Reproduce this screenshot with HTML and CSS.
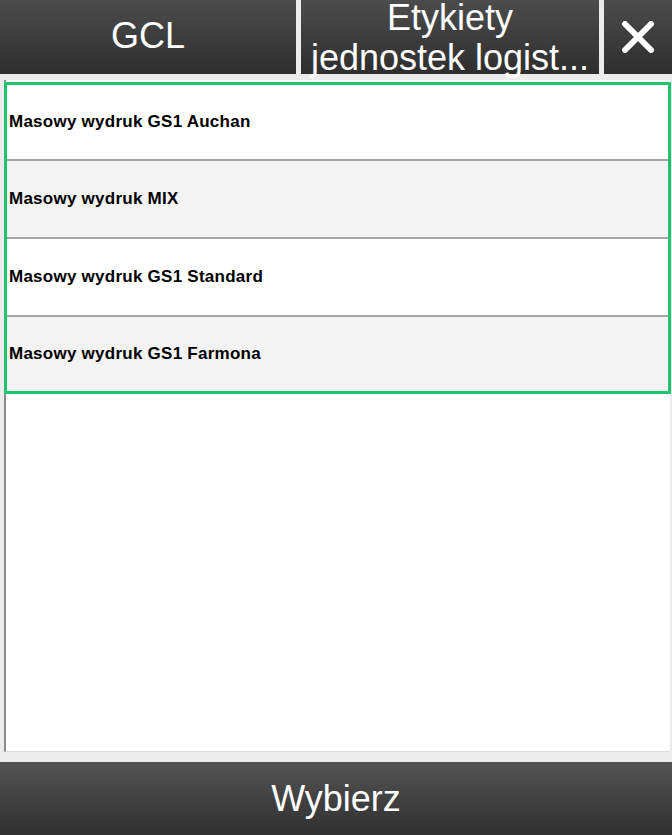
FILE: index.html
```html
<!DOCTYPE html>
<html>
<head>
<meta charset="utf-8">
<link rel="stylesheet" href="styles.css">
</head>
<body>
<div class="app">
  <header class="topbar">
    <div class="tbtn tbtn-main">GCL</div>
    <div class="tbtn tbtn-title"><span class="tline">Etykiety</span><span class="tline">jednostek logist...</span></div>
    <div class="tbtn tbtn-close">
      <svg width="34" height="32" viewBox="0 0 34 32"><path d="M4 3 L30 29 M30 3 L4 29" stroke="#fff" stroke-width="6" stroke-linecap="round" fill="none"/></svg>
    </div>
  </header>
  <main class="listwrap">
    <div class="list">
      <div class="row">Masowy wydruk GS1 Auchan</div>
      <div class="row alt">Masowy wydruk MIX</div>
      <div class="row">Masowy wydruk GS1 Standard</div>
      <div class="row alt">Masowy wydruk GS1 Farmona</div>
    </div>
  </main>
  <footer class="bottombar">Wybierz</footer>
</div>
</body>
</html>
```
FILE: styles.css
```css
html, body {
  margin: 0;
  padding: 0;
  background: #ececec;
}
.app {
  width: 672px;
  height: 835px;
  display: flex;
  flex-direction: column;
  font-family: "Liberation Sans", Arial, sans-serif;
}
.topbar {
  height: 74px;
  display: flex;
  gap: 5px;
  background: #ececec;
}
.tbtn {
  height: 74px;
  background: linear-gradient(#4c4c4c, #2e2e2e);
  color: #fff;
  display: flex;
  align-items: center;
  justify-content: center;
  text-align: center;
  font-size: 36px;
}
.tbtn-main { width: 296px; padding-bottom: 3px; box-sizing: border-box; }
.tbtn-title {
  width: 298px;
  flex-direction: column;
  justify-content: flex-start;
  gap: 4px;
}
.tline {
  display: block;
  line-height: 36px;
  white-space: nowrap;
}
.tbtn-close { flex: 1; }
.listwrap {
  margin: 6px 2px 0 4px;
  height: 672px;
  background: #fff;
  border-left: 2px solid #8a8a8a;
  border-bottom: 1px solid #dcdcdc;
  box-sizing: border-box;
  padding-top: 2px;
}
.list {
  border: 3px solid #1ec46e;
  margin-left: -2px;
  margin-right: -1px;
}
.row {
  height: 76px;
  display: flex;
  align-items: center;
  padding-left: 2px;
  font-size: 17px;
  letter-spacing: 0.25px;
  font-weight: bold;
  color: #000;
  background: #fff;
  border-bottom: 2px solid #a6a6a6;
}
.row:first-child { height: 74px; }
.row:last-child { border-bottom: none; height: 74px; }
.row.alt { background: #f3f3f3; }
.bottombar {
  margin-top: 10px;
  flex: 1;
  background: linear-gradient(#545454, #2f2f2f);
  color: #fff;
  font-size: 36px;
  display: flex;
  align-items: center;
  justify-content: center;
}
```
